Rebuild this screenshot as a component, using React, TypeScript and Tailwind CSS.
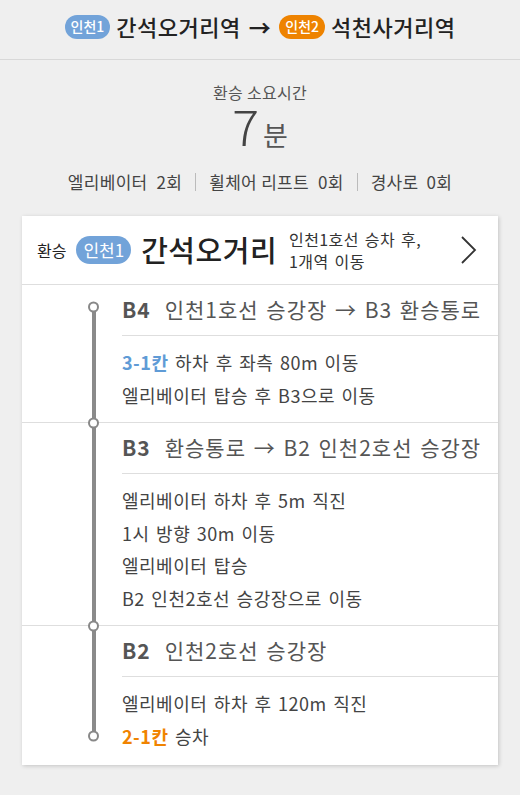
const font = { fontFamily: '"Noto Sans CJK KR", "Noto Sans", sans-serif' };

type Line = { hl?: string; color?: string; text: string };

type Step = {
  floor: string;
  title: string;
  lines: Line[];
  first?: boolean;
  last?: boolean;
};

const steps: Step[] = [
  {
    floor: 'B4',
    title: '인천1호선 승강장 → B3 환승통로',
    lines: [
      { hl: '3-1칸', color: 'text-[#5f9bd6]', text: ' 하차 후 좌측 80m 이동' },
      { text: '엘리베이터 탑승 후 B3으로 이동' },
    ],
    first: true,
  },
  {
    floor: 'B3',
    title: '환승통로 → B2 인천2호선 승강장',
    lines: [
      { text: '엘리베이터 하차 후 5m 직진' },
      { text: '1시 방향 30m 이동' },
      { text: '엘리베이터 탑승' },
      { text: 'B2 인천2호선 승강장으로 이동' },
    ],
  },
  {
    floor: 'B2',
    title: '인천2호선 승강장',
    lines: [
      { text: '엘리베이터 하차 후 120m 직진' },
      { hl: '2-1칸', color: 'text-[#f08300]', text: ' 승차' },
    ],
    last: true,
  },
];

const Dot = ({ className }: { className: string }) => (
  <div
    className={`absolute left-[66px] h-[11px] w-[11px] -translate-y-1/2 rounded-full border-[2.5px] border-[#888] bg-white ${className}`}
  />
);

const StepRow = ({ step }: { step: Step }) => (
  <div className="flex border-t border-[#dedede]">
    <div className="relative w-[100px] shrink-0">
      <div
        className={`absolute left-[69.5px] w-[4px] bg-[#8a8a8a] ${step.first ? 'top-[22px]' : 'top-0'} ${
          step.last ? 'bottom-[29px]' : 'bottom-0'
        }`}
      />
      {step.first ? <Dot className="top-[22px]" /> : <Dot className="top-0" />}
      {step.last && <Dot className="bottom-[29px] translate-y-1/2" />}
    </div>
    <div className="min-w-0 flex-1">
      <div className="flex h-[51px] items-center border-b border-[#dedede] text-[21px] tracking-[1px] whitespace-nowrap text-[#555] [word-spacing:2px]">
        <span className="font-bold">{step.floor}</span>
        <span className="ml-[14px]">{step.title}</span>
      </div>
      <div className={`pt-[10px] ${step.last ? 'pb-[13px]' : 'pb-[11px]'}`}>
        {step.lines.map((l, i) => (
          <div key={i} className="text-[18px] leading-[32.5px] tracking-[0.5px] text-[#444] [word-spacing:2px]">
            {l.hl && <span className={`font-bold ${l.color}`}>{l.hl}</span>}
            {l.text}
          </div>
        ))}
      </div>
    </div>
  </div>
);

const Badge = ({ label, color, size }: { label: string; color: string; size: 'sm' | 'lg' }) => (
  <span
    className={`inline-flex items-center justify-center rounded-full text-white ${color} ${
      size === 'sm'
        ? 'h-[24px] px-[6px] text-[14px] font-medium tracking-normal'
        : 'h-[28px] px-[7px] text-[17px] tracking-normal'
    }`}
  >
    {label}
  </span>
);

export default function App() {
  return (
    <div className="min-h-[795px] w-[520px] bg-[#efefef]" style={font}>
      <div className="flex h-[60px] items-center justify-center gap-[6px] border-b border-[#d8d8d8] pb-[6px] text-[22px] font-medium tracking-[0.5px] text-[#222]">
        <Badge label="인천1" color="bg-[#72a3d9]" size="sm" />
        <span>간석오거리역</span>
        <span className="mx-[2px] font-bold">→</span>
        <Badge label="인천2" color="bg-[#ee8300]" size="sm" />
        <span>석천사거리역</span>
      </div>

      <div className="flex flex-col items-center pt-[20px] text-[#555]">
        <div className="text-[16px] leading-[24px] tracking-[0.3px]">환승 소요시간</div>
        <div className="flex items-baseline leading-[40px]">
          <span className="text-[50px] font-light text-[#444]">7</span>
          <span className="ml-[4px] text-[27px]">분</span>
        </div>
        <div className="mt-[15px] flex items-center text-[17px] leading-[24px] tracking-[0.3px] text-[#444]">
          <span>
            엘리베이터<span className="ml-[9px]">2회</span>
          </span>
          <span className="mx-[13px] h-[18px] w-px bg-[#bbb]" />
          <span>
            휠체어 리프트<span className="ml-[9px]">0회</span>
          </span>
          <span className="mx-[13px] h-[18px] w-px bg-[#bbb]" />
          <span>
            경사로<span className="ml-[8px]">0회</span>
          </span>
        </div>
      </div>

      <div className="mx-[22px] mt-[22px] bg-white shadow-[1px_1px_4px_rgba(0,0,0,0.18)]">
        <div className="flex h-[68px] items-center pl-[15px] pr-[20px]">
          <span className="text-[16px] text-[#222]">환승</span>
          <span className="ml-[10px]">
            <Badge label="인천1" color="bg-[#72a3d9]" size="lg" />
          </span>
          <span className="ml-[10px] text-[29px] font-medium tracking-[0.5px] text-[#222]">간석오거리</span>
          <div className="ml-[12px] text-[16px] leading-[22px] tracking-[0.4px] text-[#333] [word-spacing:2px]">
            <div>인천1호선 승차 후,</div>
            <div>1개역 이동</div>
          </div>
          <svg className="ml-auto" width="20" height="30" viewBox="0 0 20 30" fill="none">
            <path d="M4 2 L17 15 L4 28" stroke="#333" strokeWidth="1.8" />
          </svg>
        </div>
        {steps.map((s) => (
          <StepRow key={s.floor} step={s} />
        ))}
      </div>
    </div>
  );
}
